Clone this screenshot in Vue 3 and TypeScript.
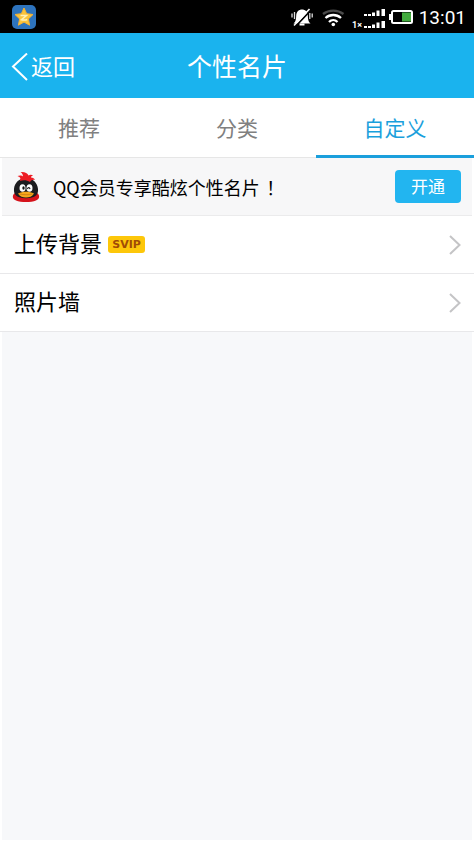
<script setup lang="ts">
import { ref } from 'vue'

interface Tab {
  id: string
  label: string
}
interface Entry {
  id: string
  label: string
  badge?: string
}

const tabs: Tab[] = [
  { id: 'recommend', label: '推荐' },
  { id: 'category', label: '分类' },
  { id: 'custom', label: '自定义' },
]
const entries: Entry[] = [
  { id: 'background', label: '上传背景', badge: 'SVIP' },
  { id: 'photos', label: '照片墙' },
]
const active = ref('custom')
</script>

<template>
  <div class="screen">
    <div class="status">
      <svg class="app-icon" width="24" height="24" viewBox="0 0 24 24" aria-hidden="true">
        <rect width="24" height="24" rx="5" fill="#2d73bd" />
        <path d="M12 3l2.700 5.700 6.300.8-4.600 4.400 1.200 6.300-5.600-3.100-5.600 3.100 1.200-6.300L3 9.500l6.300-.8z" fill="#fbc53c" stroke="#f6b030" stroke-width="1" stroke-linejoin="round" />
        <path d="M8.500 10.500h6l-5 4.200c2.200.6 4 .5 5.700-.2" fill="none" stroke="#fff0b8" stroke-width="1.500" />
      </svg>
      <div class="status-right">
        <svg width="122" height="24" viewBox="0 0 122 24" aria-hidden="true">
          <!-- muted bell -->
          <path d="M2.500 18.500C5 16.500 5 14 5.200 10.500 5.500 6.500 8 4.500 11 4.500s5.500 2 5.800 6c.2 3.500.2 6 2.700 8z" fill="#fff" />
          <path d="M8.500 19.500h5" stroke="#fff" stroke-width="2" />
          <path d="M4.500 21.500L19.500 5.500" stroke="#000" stroke-width="1.800" />
          <path d="M3 20.500L18.500 4" stroke="#fff" stroke-width="1.600" />
          <path d="M3.500 7v7M1 8.500v4M18.800 8v6M21.200 8.500v4" stroke="#ddd" stroke-width="1.300" />
          <!-- wifi -->
          <g fill="none" stroke-width="2.300">
            <path d="M32 9c6-4.500 14.500-4.500 20.500 0" stroke="#4a4a4a" />
            <path d="M34.500 13c4.500-4 11-4 15.500 0" stroke="#fff" />
            <path d="M38 17c2.500-2.500 6-2.500 8.500 0" stroke="#fff" />
          </g>
          <circle cx="42.300" cy="19.500" r="1.800" fill="#fff" />
          <!-- two signal meters -->
          <g fill="#fff">
            <path d="M73 9h3v2h-3zM77 9h3v2h-3zM81 7.500h3v3.500h-3zM85.500 5.500h3V11h-3zM90.500 4H94v7h-3.500z" />
            <path d="M73 21h3v2h-3zM77 21h3v2h-3zM81 19.500h3v3.500h-3zM85.500 17.500h3V23h-3zM90.500 16H94v7h-3.500z" />
          </g>
          <text class="sim" x="61" y="23">1×</text>
          <!-- battery -->
          <rect x="101" y="6" width="20" height="12" rx="1.500" fill="none" stroke="#fff" stroke-width="2" />
          <rect x="98" y="9" width="3" height="6" fill="#fff" />
          <rect x="111" y="7.500" width="9" height="9" fill="#42ab3e" />
        </svg>
        <span class="clock">13:01</span>
      </div>
    </div>

    <header class="header">
      <button class="back" type="button">
        <svg width="18" height="30" viewBox="0 0 18 30" aria-hidden="true">
          <path d="M16 0.500L2 13.500 16 27" fill="none" stroke="#fff" stroke-width="2" />
        </svg>
        <span>返回</span>
      </button>
      <h1>个性名片</h1>
    </header>

    <nav class="tabs">
      <button
        v-for="tab in tabs"
        :key="tab.id"
        type="button"
        class="tab"
        :class="{ active: active === tab.id }"
        @click="active = tab.id"
      >
        {{ tab.label }}
      </button>
    </nav>

    <main class="content">
      <section class="promo">
        <svg class="penguin" width="28" height="32" viewBox="0 0 28 32" aria-hidden="true">
          <path d="M3 22C0 24 0 28 4 29.500c5 2 15 2 20 0 4-1.500 4-5.500 1-7.500z" fill="#d5121b" />
          <path d="M14 7C7 7 2.500 12 2 18c-.3 3 .5 5 2 6.500 4 3.500 16 3.500 20 0 1.500-1.500 2.300-3.500 2-6.500C25.500 12 21 7 14 7z" fill="#1c1c1f" />
          <path d="M8 10c1-3 0-4-2.500-5C8 4 10 4.500 11 5.500 11 3.500 10 2 8.500 1c4-.5 7 1 8 3.500 1.500-1 3-1 4.500 0-1.500.5-2 1-2 2 2 0 3.500 1 4 2.500-2-.5-4 0-5 2-3-2-7-2-10-1z" fill="#ed1c24" />
          <ellipse cx="10.500" cy="17" rx="3" ry="3.800" fill="#fff" />
          <ellipse cx="17.500" cy="17" rx="3" ry="3.800" fill="#fff" />
          <ellipse cx="11.500" cy="17" rx="1.200" ry="1.800" fill="#111" />
          <path d="M15.500 18c.5-2 2-2 2.500 0" fill="none" stroke="#111" stroke-width="1.200" />
          <path d="M6 22.500c5-2.500 11-2.500 16 0-2 3-4.500 4-8 4s-6-1-8-4z" fill="#f7a81b" />
          <path d="M7.500 23c4.500 1 8.500 1 13 0" fill="none" stroke="#b96a12" stroke-width=".6" />
        </svg>
        <p>QQ会员专享酷炫个性名片<span class="mark">！</span></p>
        <button class="open" type="button">开通</button>
      </section>

      <ul class="list">
        <li v-for="entry in entries" :key="entry.id">
          <a href="#" class="row">
            <span>{{ entry.label }}</span>
            <span v-if="entry.badge" class="badge">{{ entry.badge }}</span>
            <svg class="chevron" width="12" height="20" viewBox="0 0 12 20" aria-hidden="true">
              <path d="M1 1l9.500 9L1 19" fill="none" stroke="#c4c4c6" stroke-width="2" />
            </svg>
          </a>
        </li>
      </ul>
    </main>
  </div>
</template>

<style>
body {
  background: #fff;
}
</style>

<style scoped>
.screen {
  display: flex;
  flex-direction: column;
  min-height: 100vh;
  box-sizing: border-box;
  padding-bottom: 2px;
  color: #000;
  font-family: Roboto, "Noto Sans CJK SC", sans-serif;
}
button {
  padding: 0;
  border: 0;
  background: none;
  color: inherit;
  font: inherit;
}
.status {
  display: flex;
  align-items: center;
  justify-content: space-between;
  height: 33px;
  padding: 0 8px 0 12px;
  background: #000;
  color: #fff;
}
.status-right {
  display: flex;
  align-items: center;
  gap: 6px;
}
.sim {
  fill: #fff;
  font-size: 9px;
  font-weight: 700;
}
.clock {
  padding-top: 3px;
  font-size: 19px;
  line-height: 24px;
}
.header {
  display: grid;
  grid-template-columns: 1fr auto 1fr;
  align-items: center;
  height: 65px;
  box-sizing: border-box;
  padding: 5px 11px 0;
  background: #1ab3ee;
  color: #fff;
}
.back {
  display: flex;
  align-items: center;
  gap: 2px;
  font-size: 22px;
  line-height: 32px;
}
h1 {
  margin: 0;
  font-size: 25px;
  font-weight: 400;
  line-height: 36px;
}
.tabs {
  display: grid;
  grid-template-columns: repeat(3, 1fr);
  height: 60px;
  background: #fff;
}
.tab {
  padding-top: 3px;
  border-bottom: 1px solid #e6e6e6;
  color: #808080;
  font-size: 21px;
  line-height: 30px;
}
.tab.active {
  padding-top: 5px;
  border-bottom: 3px solid #1a9fdc;
  color: #1a9fdc;
}
.content {
  flex: 1;
  margin: 0 2px;
  background: #f7f8fa;
}
.promo {
  display: flex;
  align-items: center;
  height: 57px;
  padding: 0 11px 0 10px;
  border-bottom: 1px solid #ebebec;
  background: #f7f7f8;
}
.promo p {
  flex: 1;
  margin: 0 0 0 13px;
  font-family: "Noto Sans CJK SC", sans-serif;
  font-size: 18px;
  line-height: 26px;
}
.promo .mark {
  margin-left: 2px;
  font-family: "Noto Sans CJK TC", sans-serif;
}
.open {
  width: 66px;
  height: 33px;
  border-radius: 4px;
  background: #22b5f0;
  color: #fff;
  font-size: 17px;
  line-height: 24px;
}
.list {
  margin: 0 -2px;
  padding: 0;
  list-style: none;
}
.row {
  display: flex;
  align-items: center;
  gap: 6px;
  height: 57px;
  padding: 0 13px 0 14px;
  border-bottom: 1px solid #e8e8ea;
  background: #fff;
  color: #000;
  font-size: 22px;
  line-height: 32px;
  text-decoration: none;
}
.badge {
  width: 37px;
  border-radius: 3px;
  background: #fdc70a;
  color: #a04c06;
  font-family: "DejaVu Sans", sans-serif;
  font-size: 11px;
  font-weight: 700;
  line-height: 17px;
  text-align: center;
}
.chevron {
  margin-left: auto;
}
</style>
